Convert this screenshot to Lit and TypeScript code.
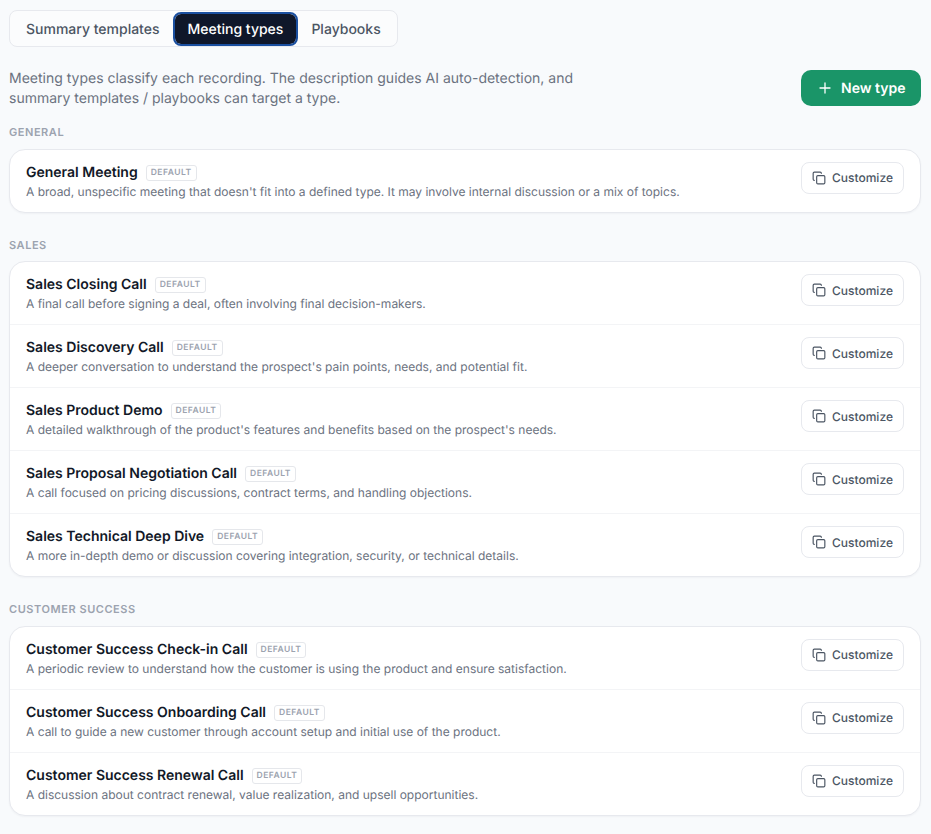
import { LitElement, html, css, svg } from "lit";
import { customElement } from "lit/decorators.js";

const groups = [
  { name: "GENERAL", items: [["General Meeting", "A broad, unspecific meeting that doesn't fit into a defined type. It may involve internal discussion or a mix of topics."]] },
  { name: "SALES", items: [
    ["Sales Closing Call", "A final call before signing a deal, often involving final decision-makers."],
    ["Sales Discovery Call", "A deeper conversation to understand the prospect's pain points, needs, and potential fit."],
    ["Sales Product Demo", "A detailed walkthrough of the product's features and benefits based on the prospect's needs."],
    ["Sales Proposal Negotiation Call", "A call focused on pricing discussions, contract terms, and handling objections."],
    ["Sales Technical Deep Dive", "A more in-depth demo or discussion covering integration, security, or technical details."],
  ] },
  { name: "CUSTOMER SUCCESS", items: [
    ["Customer Success Check-in Call", "A periodic review to understand how the customer is using the product and ensure satisfaction."],
    ["Customer Success Onboarding Call", "A call to guide a new customer through account setup and initial use of the product."],
    ["Customer Success Renewal Call", "A discussion about contract renewal, value realization, and upsell opportunities."],
  ] },
];

const copyIcon = svg`<svg class="ic" viewBox="0 0 24 24" fill="none" stroke="currentColor" stroke-width="2" stroke-linecap="round" stroke-linejoin="round"><rect x="8" y="8" width="14" height="14" rx="2"/><path d="M4 16c-1.1 0-2-.9-2-2V4c0-1.1.9-2 2-2h10c1.1 0 2 .9 2 2"/></svg>`;

@customElement("app-root")
export class AppRoot extends LitElement {
  static styles = css`
    :host { display: block; min-height: 834px; background: #f8fafc; font-family: Inter, "Liberation Sans", sans-serif; box-sizing: border-box; padding: 10px 10px 0 9px; color: #111827; text-rendering: geometricPrecision; }
    .tabs { display: inline-flex; gap: 2px; border: 1px solid #e7e9ee; border-radius: 8px; background: #fbfcfd; padding: 3px 3px 2px; height: 37px; box-sizing: border-box; align-items: stretch; vertical-align: top; }
    .tab { display: flex; align-items: center; padding: 0 13px; font-size: 14px; font-weight: 500; color: #4b5563; border-radius: 6px; }
    .tab.on { background: #0f172a; color: #fff; outline: 2px solid #1a4fa0; }
    .intro { display: flex; justify-content: space-between; align-items: flex-start; margin-top: 22px; }
    .intro p { margin: 0; width: 590px; font-size: 14px; line-height: 20px; color: #6b7280; }
    .new { display: flex; align-items: center; gap: 10px; background: #1a9568; color: #fff; border-radius: 10px; height: 36px; width: 120px; box-sizing: border-box; padding-left: 18px; font-size: 14px; font-weight: 600; margin-top: 1px; }
    .new svg { width: 12px; height: 12px; }
    .label { font-size: 11px; font-weight: 600; letter-spacing: 0.55px; color: #9ca3af; line-height: 16.5px; }
    .group { margin-top: 24px; }
    .intro + .group { margin-top: 15.1px; }
    .label + .card { margin-top: 8px; }
    .card { background: #fff; border: 1px solid #e7e9ee; border-radius: 16px; box-shadow: 0 1px 2px rgba(15,23,42,0.04); }
    .row { display: flex; align-items: flex-start; justify-content: space-between; box-sizing: border-box; padding: 12px 16px; }
    .row + .row { border-top: 1px solid #f3f4f6; }
    .text { padding-top: 1px; }
    .title { display: flex; align-items: center; gap: 8px; font-size: 14px; font-weight: 600; color: #111827; line-height: 20px; }
    .badge { font-size: 8.5px; font-weight: 600; letter-spacing: 0.5px; color: #9ca3af; border: 1px solid #e5e7eb; border-radius: 3px; padding: 0 4px; line-height: 14px; }
    .desc { font-size: 12px; line-height: 16px; color: #6b7280; margin-top: 1px; }
    .btn { display: flex; align-items: center; gap: 6px; height: 32px; width: 103px; box-sizing: border-box; padding-left: 10px; border: 1px solid #e7e9ee; border-radius: 8px; background: #fff; font-size: 12px; font-weight: 500; color: #4b5563; flex: none; }
    .ic { width: 14px; height: 14px; flex: none; }
  `;

  render() {
    return html`
      <div class="tabs">
        <div class="tab">Summary templates</div>
        <div class="tab on">Meeting types</div>
        <div class="tab">Playbooks</div>
      </div>
      <div class="intro">
        <p>Meeting types classify each recording. The description guides AI auto-detection, and summary templates / playbooks can target a type.</p>
        <div class="new">
          <svg viewBox="0 0 12 12" fill="none" stroke="currentColor" stroke-width="1.3" stroke-linecap="round"><path d="M6 1v10M1 6h10"/></svg>
          New type
        </div>
      </div>
      ${groups.map((g) => html`
        <div class="group">
          <div class="label">${g.name}</div>
          <div class="card">
            ${g.items.map((it) => html`
              <div class="row">
                <div class="text">
                  <div class="title">${it[0]}<span class="badge">DEFAULT</span></div>
                  <div class="desc">${it[1]}</div>
                </div>
                <div class="btn">${copyIcon}Customize</div>
              </div>
            `)}
          </div>
        </div>
      `)}
    `;
  }
}
